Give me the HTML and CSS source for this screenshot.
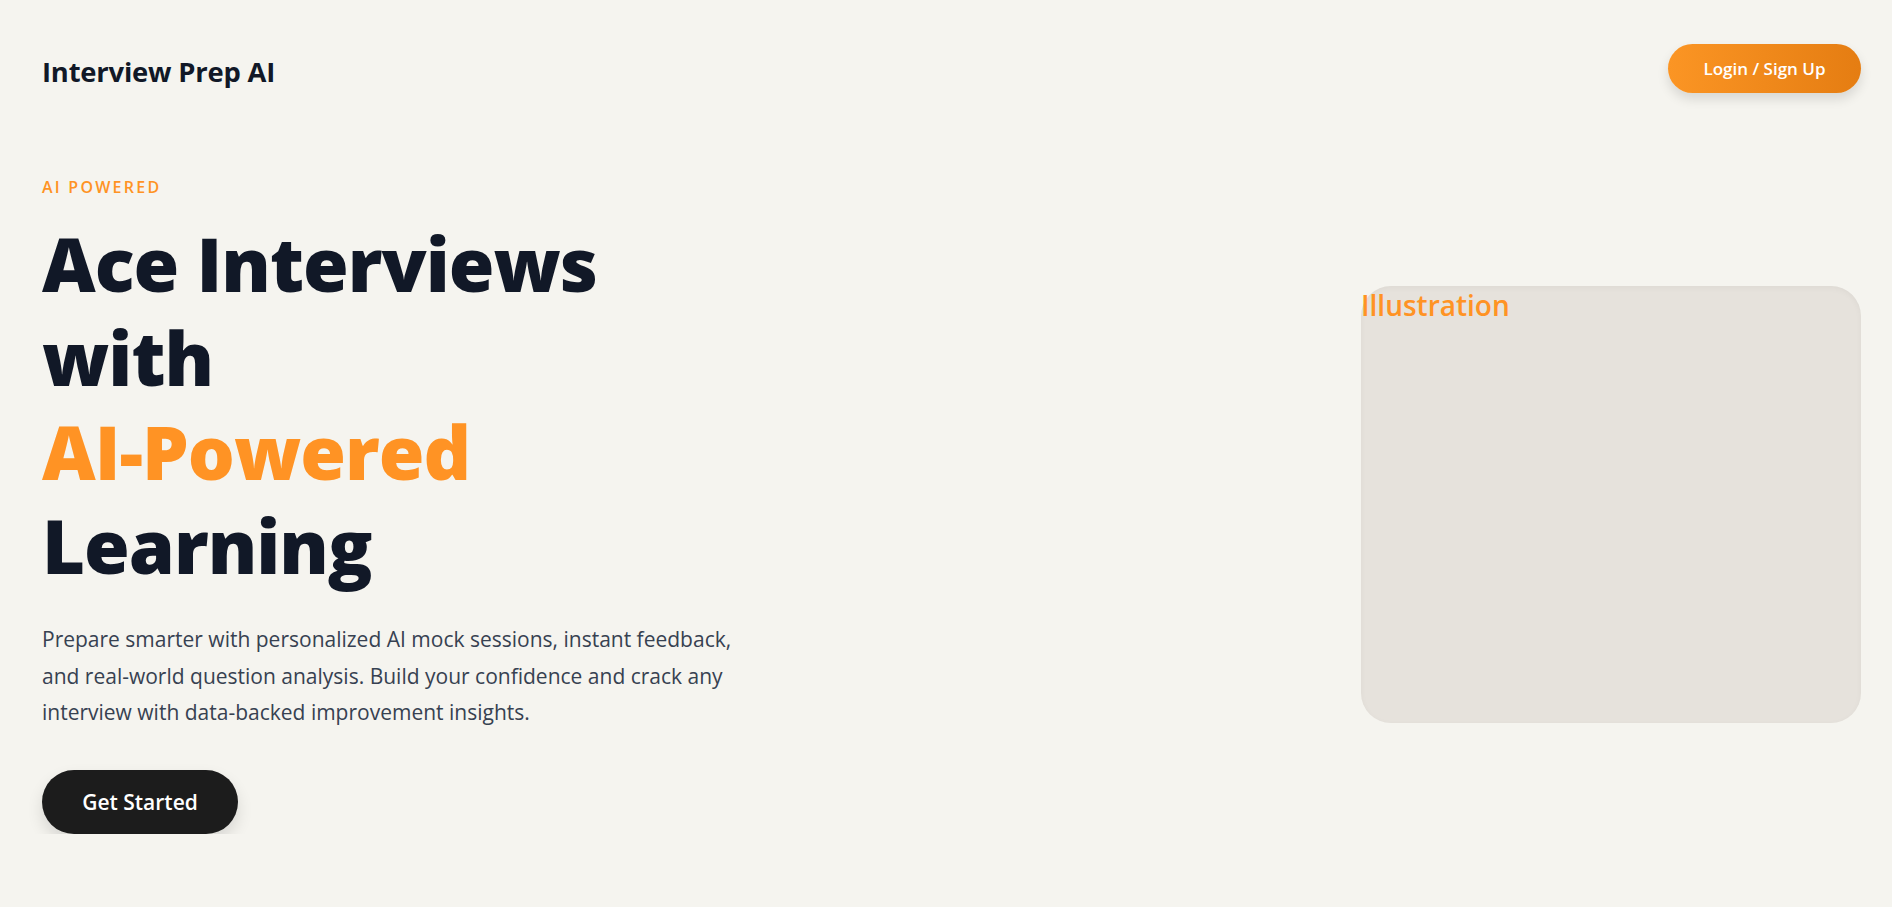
FILE: index.html
```html
<!DOCTYPE html>
<html lang="en">
<head>
<meta charset="utf-8">
<title>Interview Prep AI</title>
<link rel="stylesheet" href="styles.css">
</head>
<body>
<div class="page">
  <header class="topbar">
    <div class="logo">Interview Prep AI</div>
    <button class="login-btn">Login / Sign Up</button>
  </header>
  <main class="hero">
    <section class="hero-text">
      <div class="eyebrow">AI POWERED</div>
      <h1 class="headline">Ace Interviews<br>with<br><span class="accent">AI-Powered</span><br>Learning</h1>
      <p class="lead">Prepare smarter with personalized AI mock sessions, instant feedback, and real-world question analysis. Build your confidence and crack any interview with data-backed improvement insights.</p>
      <button class="cta">Get Started</button>
    </section>
    <section class="hero-art">
      <div class="art-box">Illustration</div>
    </section>
  </main>
</div>
</body>
</html>
```

FILE: styles.css
```css
* { box-sizing: border-box; }

html, body {
  margin: 0;
  padding: 0;
}

body {
  background: #f5f4ef;
  font-family: "Open Sans", "Noto Sans", sans-serif;
  color: #111827;
}

.page {
  padding: 44px 31px 0 42px;
}

.topbar {
  display: flex;
  align-items: center;
  justify-content: space-between;
}

.logo {
  font-size: 27.4px;
  font-weight: 700;
  color: #111827;
  letter-spacing: -0.2px;
  padding-top: 5px;
}

.login-btn {
  font-family: inherit;
  font-size: 17px;
  font-weight: 600;
  color: #ffffff;
  border: none;
  border-radius: 999px;
  height: 49px;
  width: 193px;
  padding: 0;
  background: linear-gradient(90deg, #fb9524 0%, #e57d12 100%);
  box-shadow: 0 6px 12px rgba(0, 0, 0, 0.12);
  cursor: pointer;
}

.hero {
  display: flex;
  align-items: center;
  justify-content: space-between;
  margin-top: 82px;
}

.hero-text {
  display: flex;
  flex-direction: column;
  align-items: flex-start;
}

.eyebrow {
  font-size: 16px;
  font-weight: 600;
  color: #ff9324;
  letter-spacing: 0.14em;
  line-height: 24px;
}

.headline {
  margin: 17.5px 0 0 0;
  font-size: 74px;
  font-weight: 800;
  line-height: 94px;
  color: #111827;
  letter-spacing: -1px;
}

.accent {
  color: #ff9324;
}

.lead {
  margin: 28.4px 0 0 0;
  max-width: 705px;
  font-size: 21px;
  line-height: 36.7px;
  color: #374151;
}

.cta {
  margin-top: 38.6px;
  font-family: inherit;
  font-size: 21px;
  font-weight: 600;
  color: #ffffff;
  background: #1c1c1c;
  border: none;
  border-radius: 999px;
  height: 64px;
  width: 196px;
  padding: 0;
  box-shadow: 0 8px 16px rgba(0, 0, 0, 0.12);
  cursor: pointer;
}

.hero-art {
  display: flex;
}

.art-box {
  width: 500px;
  height: 437px;
  border-radius: 30px;
  background: #e6e2dc;
  box-shadow: inset 0 2px 6px rgba(0, 0, 0, 0.04);
  color: #ff9324;
  font-size: 28px;
  font-weight: 600;
  line-height: 1.2;
  padding-top: 3px;
}
```
